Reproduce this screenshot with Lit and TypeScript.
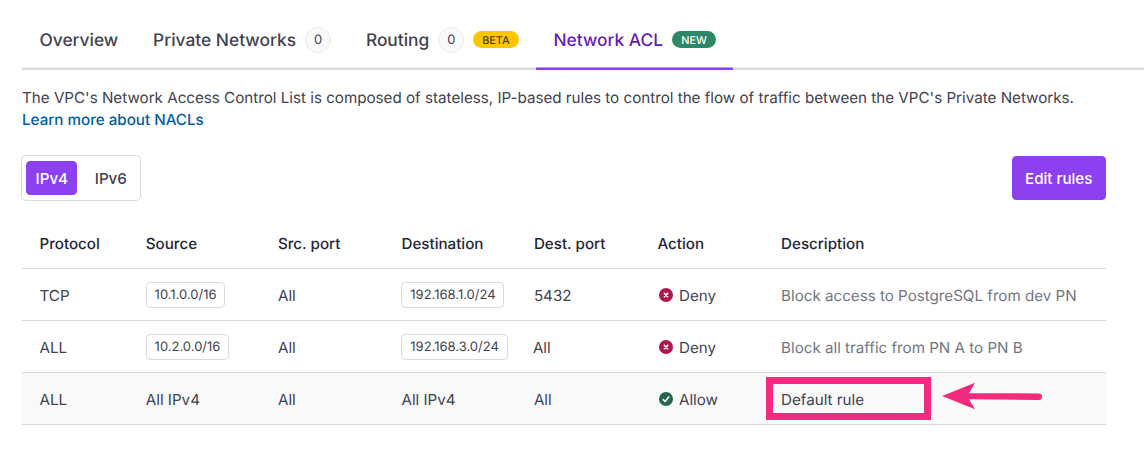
import { LitElement, html, css, svg, nothing } from "lit";
import { customElement, property, state } from "lit/decorators.js";

interface Rule {
  protocol: string;
  source: string;
  srcPort: string;
  destination: string;
  destPort: string;
  action: "Deny" | "Allow";
  description: string;
  isDefault?: boolean;
  shiftedPort?: boolean;
}

const RULES: Rule[] = [
  { protocol: "TCP", source: "10.1.0.0/16", srcPort: "All", destination: "192.168.1.0/24", destPort: "5432", action: "Deny", description: "Block access to PostgreSQL from dev PN" },
  { protocol: "ALL", source: "10.2.0.0/16", srcPort: "All", destination: "192.168.3.0/24", destPort: "All", action: "Deny", description: "Block all traffic from PN A to PN B", shiftedPort: true },
  { protocol: "ALL", source: "All IPv4", srcPort: "All", destination: "All IPv4", destPort: "All", action: "Allow", description: "Default rule", isDefault: true },
];

@customElement("acl-status")
class AclStatus extends LitElement {
  @property() action = "Deny";

  static styles = css`
    :host { display: flex; align-items: center; gap: 6.2px; }
    svg { display: block; width: 14px; height: 14px; margin: 0 0 1px 1.3px; }
  `;

  render() {
    const deny = this.action === "Deny";
    return html`
      <svg viewBox="0 0 14 14" fill="none">
        <circle cx="7" cy="7" r="7" fill=${deny ? "#b3144d" : "#22674e"}></circle>
        ${deny
          ? svg`<path d="M5.4 5.4 8.7 8.7M8.7 5.4 5.4 8.7" stroke="#fff" stroke-width="1.6" stroke-linecap="round"/>`
          : svg`<path d="M4.2 7.6 6.1 9.4 9.8 4.9" stroke="#fff" stroke-width="1.5" stroke-linecap="round" stroke-linejoin="round"/>`}
      </svg>
      <span>${this.action}</span>
    `;
  }
}

@customElement("app-root")
class AppRoot extends LitElement {
  @state() private family = "IPv4";

  static styles = css`
    :host {
      display: block;
      box-sizing: border-box;
      height: 467px;
      padding-left: 22px;
      overflow: hidden;
      background: #fff;
      color: #3f4250;
      font: 400 15.17px/21.67px Inter, "Noto Sans", sans-serif;
      text-rendering: geometricPrecision;
    }
    * { box-sizing: border-box; }
    button { font: inherit; border: 0; margin: 0; padding: 0; background: none; color: inherit; white-space: nowrap; }
    .tabs {
      display: flex;
      height: 70px;
      padding-top: 12px;
      box-shadow: inset 0 -2.5px 0 #d9dadd;
      font-size: 17.36px;
      font-weight: 500;
    }
    .tab { display: flex; align-items: center; height: 58px; padding: 0 17.45px 3px; white-space: nowrap; }
    .label { padding-top: 2px; }
    .tab.active { color: #641cb3; box-shadow: inset 0 -2.5px 0 #8c40ef; }
    .count {
      display: flex;
      align-items: center;
      justify-content: center;
      width: 26px;
      height: 26px;
      margin-left: 9px;
      padding-top: 2px;
      border: 1px solid #e9eaeb;
      border-radius: 50%;
      background: #f9f9fa;
      font-size: 13px;
      font-weight: 400;
    }
    .pill {
      display: flex;
      align-items: center;
      justify-content: center;
      height: 17.4px;
      margin-left: 9px;
      padding: 2px 8.9px 0;
      border-radius: 9px;
      font-size: 10.83px;
      line-height: 16px;
      font-weight: 500;
    }
    .beta { background: #ffc600; color: #4a3b10; }
    .new { background: #2c8866; color: #fff; padding: 2px 9.2px 0; }
    .intro { margin: 17px 0 0; font-size: 15.18px; white-space: nowrap; }
    .link { display: block; color: #0060a3; font-weight: 500; text-decoration: none; }
    .toolbar { display: flex; align-items: center; justify-content: space-between; width: 1084px; margin-top: 25px; }
    .segmented {
      display: flex;
      height: 45.5px;
      margin-left: -0.7px;
      padding: 4.5px 4px;
      border: 1px solid #d9dadd;
      border-radius: 4.5px;
      background: #fff;
    }
    .segment { width: 51px; padding-top: 1px; border-radius: 4.3px; font-weight: 500; }
    .segment + .segment { width: 59px; padding-left: 8px; }
    .segment.on { background: #8c40ef; color: #fff; }
    .edit { width: 94.5px; height: 43.5px; padding-top: 1px; border-radius: 4.3px; background: #8c40ef; color: #fff; font-weight: 500; }
    .table { width: 1084px; margin-top: 16.5px; }
    .row {
      display: grid;
      grid-template-columns: 106.3px 132.2px 123.5px 132.4px 123.6px 123.6px 1fr;
      align-items: center;
      height: 52px;
      padding: 1px 0 0 17.5px;
      border-bottom: 1px solid #d9dadd;
      white-space: nowrap;
    }
    .head { color: #222638; font-weight: 500; }
    .locked { background: #f9f9fa; }
    .cell { position: relative; }
    .tag {
      display: flex;
      align-items: center;
      width: fit-content;
      height: 26px;
      margin-bottom: 1px;
      padding: 1.4px 7.8px 0;
      border: 1px solid #d9dadd;
      border-radius: 4.3px;
      background: #fff;
      font-size: 13px;
    }
    .muted { color: #727683; }
    .nudge { position: relative; top: 0.6px; left: -1px; }
    .marker {
      position: absolute;
      left: -15px;
      top: -11.9px;
      width: 164.5px;
      height: 43px;
      border: 7px solid #f22b7f;
    }
    .arrow { position: absolute; left: 161px; top: -9px; width: 102px; height: 30px; }
  `;

  private address(value: string) {
    return value.includes("/") ? html`<span class="tag">${value}</span>` : value;
  }

  private row(rule: Rule) {
    return html`
      <div class="row ${rule.isDefault ? "locked" : ""}">
        <div>${rule.protocol}</div>
        <div>${this.address(rule.source)}</div>
        <div>${rule.srcPort}</div>
        <div>${this.address(rule.destination)}</div>
        <div class=${rule.shiftedPort ? "nudge" : ""}>${rule.destPort}</div>
        <acl-status action=${rule.action}></acl-status>
        <div class="cell ${rule.isDefault ? "" : "muted"}">
          ${rule.description}
          ${rule.isDefault
            ? html`<div class="marker"></div>
                <svg class="arrow" viewBox="0 0 102 30" fill="#f22b7f">
                  <path d="M0 16 33 2.8 27 13.2 96.7 13.4A3.3 3.3 0 0 1 96.7 20L27 19.2 33 29.2Z"></path>
                </svg>`
            : nothing}
        </div>
      </div>
    `;
  }

  render() {
    const headings = ["Protocol", "Source", "Src. port", "Destination", "Dest. port", "Action", "Description"];
    return html`
      <nav class="tabs">
        <div class="tab"><span class="label">Overview</span></div>
        <div class="tab"><span class="label">Private Networks</span><span class="count">0</span></div>
        <div class="tab"><span class="label">Routing</span><span class="count">0</span><span class="pill beta">BETA</span></div>
        <div class="tab active"><span class="label">Network ACL</span><span class="pill new">NEW</span></div>
      </nav>
      <p class="intro">
        The VPC's Network Access Control List is composed of stateless, IP-based rules to control the flow of traffic between the VPC's Private Networks.
        <a class="link">Learn more about NACLs</a>
      </p>
      <div class="toolbar">
        <div class="segmented">
          ${["IPv4", "IPv6"].map(
            (name) => html`<button class="segment ${this.family === name ? "on" : ""}" @click=${() => (this.family = name)}>${name}</button>`
          )}
        </div>
        <button class="edit">Edit rules</button>
      </div>
      <div class="table">
        <div class="row head">${headings.map((h) => html`<div>${h}</div>`)}</div>
        ${RULES.map((rule) => this.row(rule))}
      </div>
    `;
  }
}
